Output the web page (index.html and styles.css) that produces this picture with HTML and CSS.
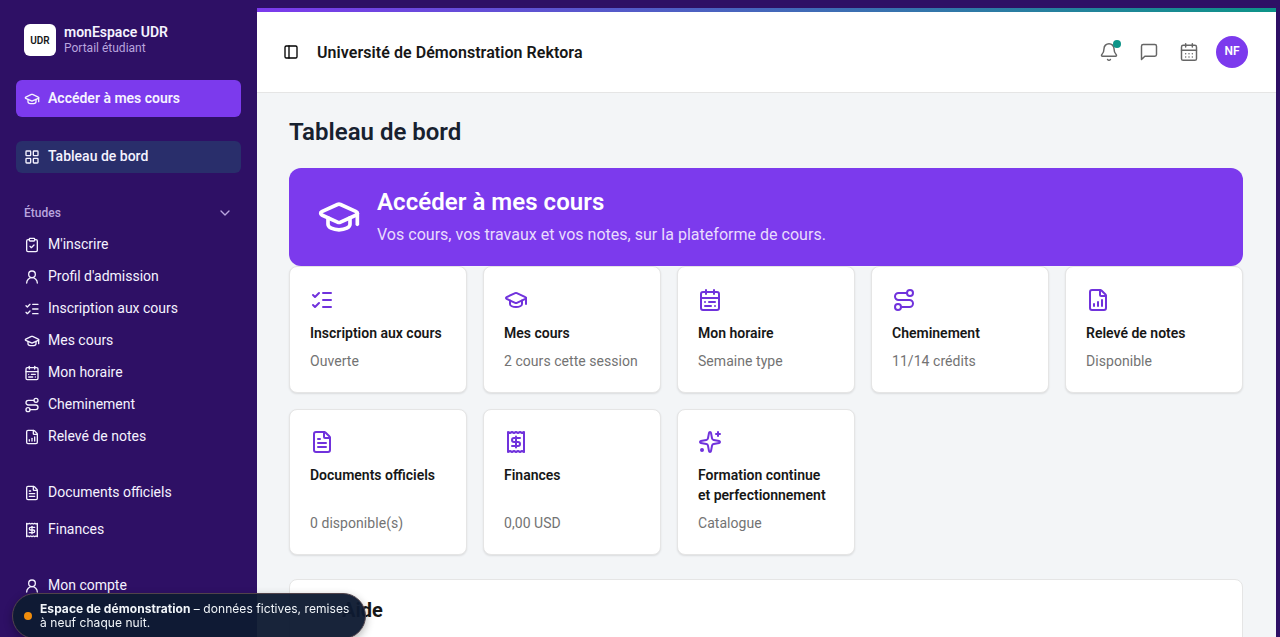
FILE: index.html
```html
<!DOCTYPE html>
<html lang="fr">
<head>
  <meta charset="UTF-8">
  <meta name="viewport" content="width=device-width, initial-scale=1.0">
  <title>monEspace UDR</title>
  <link rel="stylesheet" href="styles.css">
</head>
<body>
  <!-- Icons -->
  <svg class="sprite" aria-hidden="true">
    <symbol id="cap" viewBox="0 0 24 24"><path d="M21.42 10.922a1 1 0 0 0-.019-1.838L12.83 5.18a2 2 0 0 0-1.66 0L2.6 9.08a1 1 0 0 0 0 1.832l8.57 3.908a2 2 0 0 0 1.66 0z"/><path d="M22 10v6"/><path d="M6 12.5V16a6 3 0 0 0 12 0v-3.5"/></symbol>
    <symbol id="grid" viewBox="0 0 24 24"><rect width="7" height="7" x="3" y="3" rx="1"/><rect width="7" height="7" x="14" y="3" rx="1"/><rect width="7" height="7" x="14" y="14" rx="1"/><rect width="7" height="7" x="3" y="14" rx="1"/></symbol>
    <symbol id="chevron" viewBox="0 0 24 24"><path d="m6 9 6 6 6-6"/></symbol>
    <symbol id="clipboard" viewBox="0 0 24 24"><rect width="8" height="4" x="8" y="2" rx="1"/><path d="M16 4h2a2 2 0 0 1 2 2v14a2 2 0 0 1-2 2H6a2 2 0 0 1-2-2V6a2 2 0 0 1 2-2h2"/><path d="m9 14 2 2 4-4"/></symbol>
    <symbol id="user" viewBox="0 0 24 24"><circle cx="12" cy="8" r="5"/><path d="M20 21a8 8 0 0 0-16 0"/></symbol>
    <symbol id="checks" viewBox="0 0 24 24"><path d="M13 5h8"/><path d="M13 12h8"/><path d="M13 19h8"/><path d="m3 17 2 2 4-4"/><path d="m3 7 2 2 4-4"/></symbol>
    <symbol id="calendar" viewBox="0 0 24 24"><rect width="18" height="18" x="3" y="4" rx="2"/><path d="M16 2v4"/><path d="M3 10h18"/><path d="M8 2v4"/><path d="M17 14h-6"/><path d="M13 18H7"/><path d="M7 14h.01"/><path d="M17 18h.01"/></symbol>
    <symbol id="days" viewBox="0 0 24 24"><path d="M8 2v4"/><path d="M16 2v4"/><rect width="18" height="18" x="3" y="4" rx="2"/><path d="M3 10h18"/><path d="M8 14h.01"/><path d="M12 14h.01"/><path d="M16 14h.01"/><path d="M8 18h.01"/><path d="M12 18h.01"/><path d="M16 18h.01"/></symbol>
    <symbol id="route" viewBox="0 0 24 24"><circle cx="6" cy="19" r="3"/><path d="M9 19h8.500a3.500 3.500 0 0 0 0-7h-11a3.500 3.500 0 0 1 0-7H15"/><circle cx="18" cy="5" r="3"/></symbol>
    <symbol id="chart" viewBox="0 0 24 24"><path d="M6 22a2 2 0 0 1-2-2V4a2 2 0 0 1 2-2h8a2.400 2.400 0 0 1 1.704.706l3.588 3.588A2.400 2.400 0 0 1 20 8v12a2 2 0 0 1-2 2z"/><path d="M14 2v5a1 1 0 0 0 1 1h5"/><path d="M8 18v-2"/><path d="M12 18v-4"/><path d="M16 18v-6"/></symbol>
    <symbol id="file" viewBox="0 0 24 24"><path d="M6 22a2 2 0 0 1-2-2V4a2 2 0 0 1 2-2h8a2.400 2.400 0 0 1 1.704.706l3.588 3.588A2.400 2.400 0 0 1 20 8v12a2 2 0 0 1-2 2z"/><path d="M14 2v5a1 1 0 0 0 1 1h5"/><path d="M10 9H8"/><path d="M16 13H8"/><path d="M16 17H8"/></symbol>
    <symbol id="receipt" viewBox="0 0 24 24"><path d="M4 2v20l2-1 2 1 2-1 2 1 2-1 2 1 2-1 2 1V2l-2 1-2-1-2 1-2-1-2 1-2-1-2 1Z"/><path d="M16 8h-6a2 2 0 1 0 0 4h4a2 2 0 1 1 0 4H8"/><path d="M12 17.500v-11"/></symbol>
    <symbol id="sparkle" viewBox="0 0 24 24"><path d="M11.017 2.814a1 1 0 0 1 1.966 0l1.051 5.558a2 2 0 0 0 1.594 1.594l5.558 1.051a1 1 0 0 1 0 1.966l-5.558 1.051a2 2 0 0 0-1.594 1.594l-1.051 5.558a1 1 0 0 1-1.966 0l-1.051-5.558a2 2 0 0 0-1.594-1.594l-5.558-1.051a1 1 0 0 1 0-1.966l5.558-1.051a2 2 0 0 0 1.594-1.594z"/><path d="M20 2v4"/><path d="M22 4h-4"/><circle cx="4" cy="20" r="1"/></symbol>
    <symbol id="panel" viewBox="0 0 24 24"><rect width="18" height="18" x="3" y="3" rx="2"/><path d="M9 3v18"/></symbol>
    <symbol id="bell" viewBox="0 0 24 24"><path d="M10.268 21a2 2 0 0 0 3.464 0"/><path d="M3.262 15.326A1 1 0 0 0 4 17h16a1 1 0 0 0 .740-1.673C19.410 13.956 18 12.499 18 8A6 6 0 0 0 6 8c0 4.499-1.411 5.956-2.738 7.326"/></symbol>
    <symbol id="message" viewBox="0 0 24 24"><path d="M21 15a2 2 0 0 1-2 2H7l-4 4V5a2 2 0 0 1 2-2h14a2 2 0 0 1 2 2z"/></symbol>
  </svg>

  <!-- Sidebar -->
  <aside class="sidebar">
    <div class="brand">
      <div class="logo">UDR</div>
      <div>
        <div class="brand-name">monEspace UDR</div>
        <div class="brand-sub">Portail étudiant</div>
      </div>
    </div>
    <a class="nav-link nav-cta" href="#"><svg class="icon"><use href="#cap"/></svg><span>Accéder à mes cours</span></a>
    <a class="nav-link active" href="#"><svg class="icon"><use href="#grid"/></svg><span>Tableau de bord</span></a>
    <div class="nav-title">Études <svg class="icon"><use href="#chevron"/></svg></div>
    <nav>
      <a class="nav-link" href="#"><svg class="icon"><use href="#clipboard"/></svg><span>M'inscrire</span></a>
      <a class="nav-link" href="#"><svg class="icon"><use href="#user"/></svg><span>Profil d'admission</span></a>
      <a class="nav-link" href="#"><svg class="icon"><use href="#checks"/></svg><span>Inscription aux cours</span></a>
      <a class="nav-link" href="#"><svg class="icon"><use href="#cap"/></svg><span>Mes cours</span></a>
      <a class="nav-link" href="#"><svg class="icon"><use href="#calendar"/></svg><span>Mon horaire</span></a>
      <a class="nav-link" href="#"><svg class="icon"><use href="#route"/></svg><span>Cheminement</span></a>
      <a class="nav-link" href="#"><svg class="icon"><use href="#chart"/></svg><span>Relevé de notes</span></a>
    </nav>
    <nav class="nav-group">
      <a class="nav-link" href="#"><svg class="icon"><use href="#file"/></svg><span>Documents officiels</span></a>
      <a class="nav-link" href="#"><svg class="icon"><use href="#receipt"/></svg><span>Finances</span></a>
    </nav>
    <nav class="nav-group">
      <a class="nav-link" href="#"><svg class="icon"><use href="#user"/></svg><span>Mon compte</span></a>
    </nav>
  </aside>

  <!-- Main Content -->
  <main class="main">
    <header class="header">
      <svg class="icon panel-icon"><use href="#panel"/></svg>
      <div class="school">Université de Démonstration Rektora</div>
      <div class="actions">
        <div class="bell"><svg class="icon"><use href="#bell"/></svg><span class="badge"></span></div>
        <svg class="icon"><use href="#message"/></svg>
        <svg class="icon"><use href="#days"/></svg>
        <div class="avatar">NF</div>
      </div>
    </header>

    <div class="content">
      <h1>Tableau de bord</h1>
      <a class="hero" href="#">
        <svg class="icon"><use href="#cap"/></svg>
        <div>
          <div class="hero-title">Accéder à mes cours</div>
          <div class="hero-text">Vos cours, vos travaux et vos notes, sur la plateforme de cours.</div>
        </div>
      </a>

      <div class="cards">
        <a class="card" href="#"><svg class="icon"><use href="#checks"/></svg><h2>Inscription aux cours</h2><p>Ouverte</p></a>
        <a class="card" href="#"><svg class="icon"><use href="#cap"/></svg><h2>Mes cours</h2><p>2 cours cette session</p></a>
        <a class="card" href="#"><svg class="icon"><use href="#calendar"/></svg><h2>Mon horaire</h2><p>Semaine type</p></a>
        <a class="card" href="#"><svg class="icon"><use href="#route"/></svg><h2>Cheminement</h2><p>11/14 crédits</p></a>
        <a class="card" href="#"><svg class="icon"><use href="#chart"/></svg><h2>Relevé de notes</h2><p>Disponible</p></a>
        <a class="card" href="#"><svg class="icon"><use href="#file"/></svg><h2>Documents officiels</h2><p>0 disponible(s)</p></a>
        <a class="card" href="#"><svg class="icon"><use href="#receipt"/></svg><h2>Finances</h2><p>0,00 USD</p></a>
        <a class="card" href="#"><svg class="icon"><use href="#sparkle"/></svg><h2>Formation continue et&nbsp;perfectionnement</h2><p>Catalogue</p></a>
      </div>

      <section class="help">
        <h2>Aide</h2>
      </section>
    </div>
  </main>

  <!-- Demo notice -->
  <div class="toast">
    <span class="toast-dot"></span>
    <div><strong>Espace de démonstration</strong> – données fictives, remises à neuf chaque nuit.</div>
  </div>
</body>
</html>
```
FILE: styles.css
```css
/* General Styles */
* {
  box-sizing: border-box;
}

body {
  margin: 0;
  height: 100vh;
  display: flex;
  overflow: hidden;
  font-family: Roboto, sans-serif;
  font-size: 14px;
  line-height: 20px;
  color: #171717;
  background-color: #2e1065;
}

a {
  color: inherit;
  text-decoration: none;
}

h1, h2, p {
  margin: 0;
}

.sprite {
  position: absolute;
  width: 0;
  height: 0;
}

.icon {
  width: 16px;
  height: 16px;
  flex-shrink: 0;
  fill: none;
  stroke: currentColor;
  stroke-width: 2;
  stroke-linecap: round;
  stroke-linejoin: round;
}

/* Sidebar */
.sidebar {
  width: 257px;
  flex-shrink: 0;
  padding: 16px 16px 0;
  color: #f5f3ff;
}

.brand {
  display: flex;
  align-items: center;
  gap: 8px;
  height: 48px;
  padding: 0 8px;
}

.logo {
  width: 32px;
  height: 32px;
  border-radius: 6px;
  background-color: white;
  color: #171717;
  font-size: 10px;
  font-weight: 600;
  line-height: 33px;
  text-align: center;
}

.brand-name {
  font-weight: 600;
  line-height: 17px;
}

.brand-sub {
  font-size: 12px;
  line-height: 15px;
  color: #b9a5df;
}

.nav-link {
  display: flex;
  align-items: center;
  gap: 8px;
  height: 32px;
  padding: 0 8px;
  border-radius: 6px;
}

.nav-link span {
  padding-bottom: 2px;
}

.nav-cta {
  height: 37px;
  margin-top: 16px;
  background-color: #7c3aed;
  font-weight: 600;
}

.active {
  margin-top: 24px;
  background-color: #292e6b;
  font-weight: 500;
}

.nav-title {
  display: flex;
  align-items: center;
  justify-content: space-between;
  height: 32px;
  margin-top: 24px;
  padding: 0 8px;
  font-size: 12px;
  font-weight: 500;
  color: #b9a5df;
}

.nav-group {
  display: grid;
  gap: 5px;
  margin-top: 24px;
}

/* Main */
.main {
  width: 1019px;
  height: calc(100vh - 8px);
  margin-top: 8px;
  overflow: hidden;
  background-color: #f3f5f7;
}

.header {
  display: flex;
  align-items: center;
  height: 85px;
  padding: 4px 28px 0 26px;
  border-bottom: 1px solid #e5e5e5;
  background: linear-gradient(to right, #7c3aed, #0d9488) top / 100% 4px no-repeat white;
}

.panel-icon {
  color: black;
}

.school {
  margin-left: 18px;
  padding-top: 2px;
  font-size: 16px;
  font-weight: 600;
  letter-spacing: 0.06px;
}

.actions {
  display: flex;
  align-items: center;
  gap: 20px;
  margin-left: auto;
  color: #666;
}

.actions .icon {
  display: block;
  width: 20px;
  height: 20px;
  stroke-width: 1.75;
}

.bell {
  position: relative;
}

.badge {
  position: absolute;
  top: -2px;
  right: -2px;
  width: 8px;
  height: 8px;
  border-radius: 50%;
  background-color: #0d9488;
}

.avatar {
  width: 32px;
  height: 32px;
  margin-left: -3px;
  border-radius: 50%;
  background-color: #7c3aed;
  color: white;
  font-size: 12px;
  font-weight: 600;
  line-height: 31px;
  text-align: center;
}

.content {
  padding: 23px 33px 0 32px;
}

h1 {
  font-size: 24px;
  font-weight: 600;
  line-height: 32px;
  color: #17212f;
}

.hero {
  display: flex;
  align-items: center;
  gap: 16px;
  height: 98px;
  margin-top: 20px;
  padding: 0 28px;
  border-radius: 12px;
  background-color: #7c3aed;
  color: white;
}

.hero .icon {
  width: 44px;
  height: 44px;
}

.hero-title {
  font-size: 24px;
  font-weight: 600;
  line-height: 30px;
  letter-spacing: 0.05px;
}

.hero-text {
  margin-top: 6px;
  font-size: 16px;
  line-height: 24px;
  letter-spacing: 0.02px;
  color: #e9dcfd;
}

.cards {
  display: grid;
  grid-template-columns: repeat(5, 1fr);
  gap: 16px;
}

.card {
  display: flex;
  flex-direction: column;
  min-height: 127px;
  padding: 21px 20px 20px;
  border: 1px solid #e5e5e5;
  border-radius: 8px;
  background-color: white;
  box-shadow: 0 1px 2px rgba(0, 0, 0, 0.1);
}

.card .icon {
  width: 24px;
  height: 24px;
  color: #7032dc;
}

.card:nth-child(n+6) {
  padding-top: 20px;
}

.card h2 {
  margin-top: 11px;
  font-size: 14px;
  font-weight: 600;
}

.card p {
  margin-top: auto;
  padding: 8px 0 1px;
  color: #737373;
  letter-spacing: 0.05px;
}

.help {
  height: 120px;
  margin-top: 24px;
  padding: 18px 20px 18px 52px;
  border: 1px solid #e5e5e5;
  border-radius: 8px;
  background-color: white;
}

.help h2 {
  font-size: 20px;
  font-weight: 700;
  line-height: 24px;
}

/* Demo notice */
.toast {
  position: fixed;
  left: 12px;
  top: 593px;
  display: flex;
  align-items: center;
  gap: 8px;
  width: 354px;
  height: 46px;
  padding: 0 11px;
  border: 1px solid #51434a;
  border-radius: 23px;
  background-color: rgba(15, 27, 50, 0.96);
  box-shadow: 0 3px 8px rgba(0, 0, 0, 0.3);
  color: #f1f5f9;
  font-family: Inter, sans-serif;
  font-size: 12px;
  line-height: 14px;
  letter-spacing: 0.06px;
}

.toast-dot {
  width: 8px;
  height: 8px;
  flex-shrink: 0;
  border-radius: 50%;
  background-color: #f08c0c;
}
```
